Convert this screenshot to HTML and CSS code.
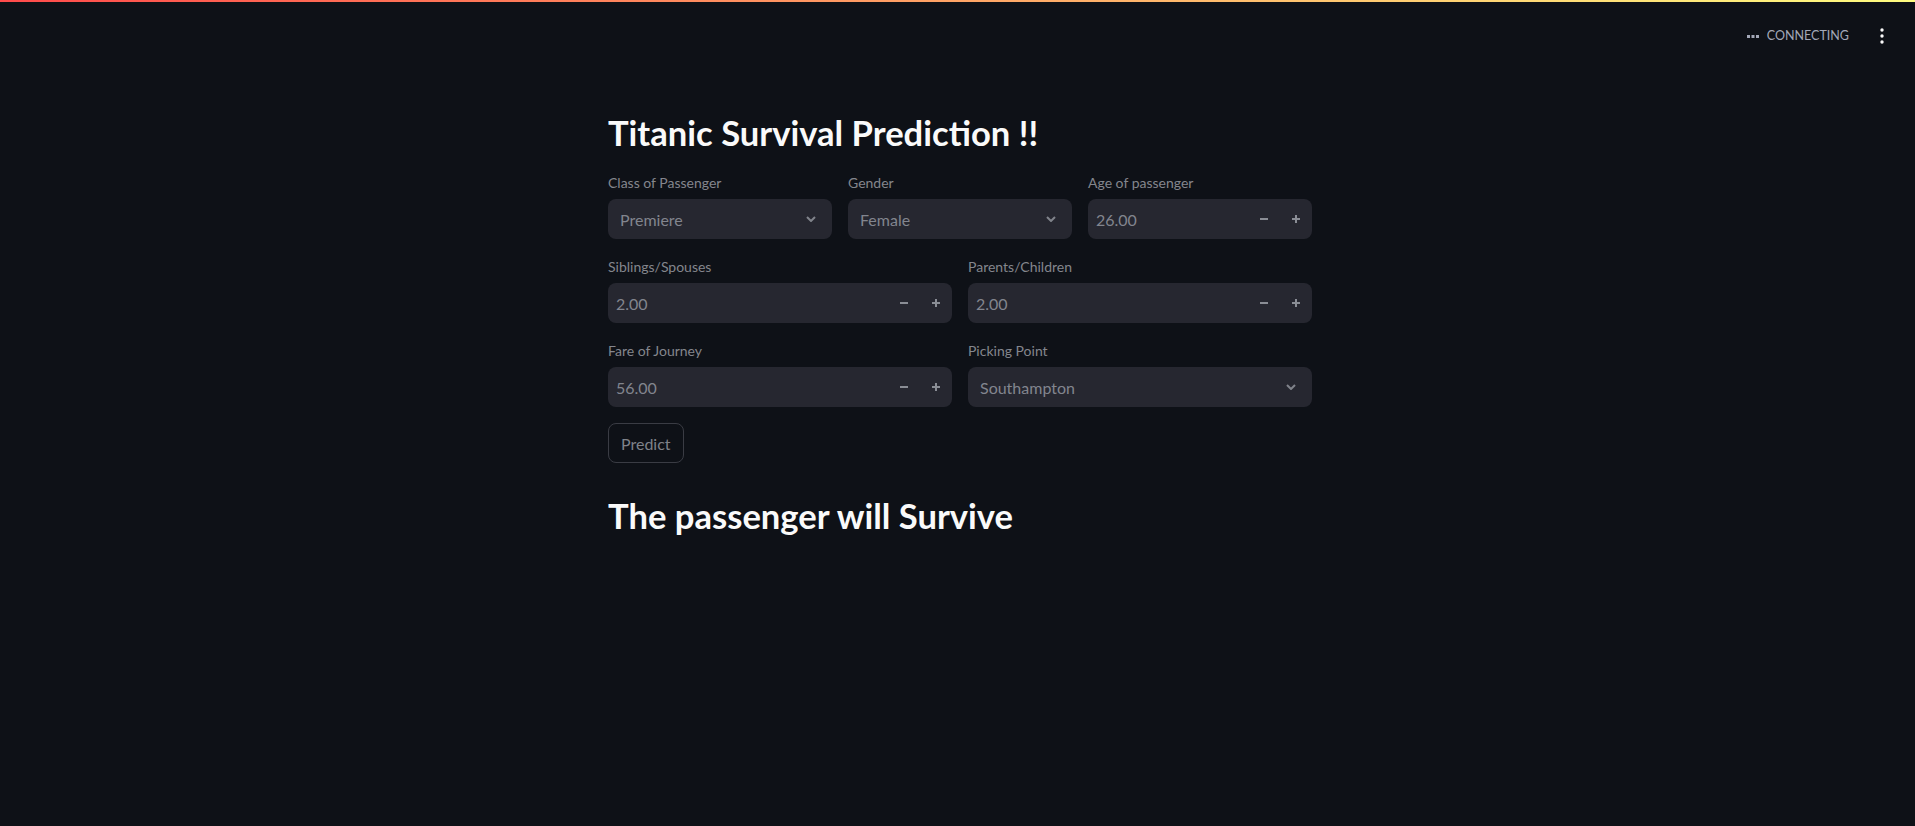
FILE: index.html
```html
<!DOCTYPE html>
<html lang="en">
<head>
<meta charset="utf-8">
<title>Titanic Survival Prediction</title>
<link rel="stylesheet" href="styles.css">
</head>
<body>
<div class="decoration"></div>
<header class="toolbar">
  <div class="status">
    <svg class="status-dots" width="12" height="4" viewBox="0 0 12 4"><rect x="0" y="1" width="3" height="3"/><rect x="4.5" y="1" width="3" height="3"/><rect x="9" y="1" width="3" height="3"/></svg>
    <span class="status-text">CONNECTING</span>
  </div>
  <button class="menu-btn" aria-label="Main menu">
    <svg width="4" height="16" viewBox="0 0 4 16"><circle cx="2" cy="2" r="1.7"/><circle cx="2" cy="8" r="1.7"/><circle cx="2" cy="14" r="1.7"/></svg>
  </button>
</header>
<main class="main">
  <div class="block">
    <h1 class="title">Titanic Survival Prediction !!</h1>

    <div class="row cols-3">
      <div class="field">
        <label class="label">Class of Passenger</label>
        <div class="select"><span class="value">Premiere</span><svg class="chevron" width="10" height="6" viewBox="0 0 10 6"><path d="M1 1l4 4 4-4"/></svg></div>
      </div>
      <div class="field">
        <label class="label">Gender</label>
        <div class="select"><span class="value">Female</span><svg class="chevron" width="10" height="6" viewBox="0 0 10 6"><path d="M1 1l4 4 4-4"/></svg></div>
      </div>
      <div class="field">
        <label class="label">Age of passenger</label>
        <div class="number"><span class="num-value">26.00</span><span class="step"><svg width="8" height="8" viewBox="0 0 8 8"><path d="M0 4h8"/></svg></span><span class="step"><svg width="8" height="8" viewBox="0 0 8 8"><path d="M0 4h8M4 0v8"/></svg></span></div>
      </div>
    </div>

    <div class="row cols-2">
      <div class="field">
        <label class="label">Siblings/Spouses</label>
        <div class="number"><span class="num-value">2.00</span><span class="step"><svg width="8" height="8" viewBox="0 0 8 8"><path d="M0 4h8"/></svg></span><span class="step"><svg width="8" height="8" viewBox="0 0 8 8"><path d="M0 4h8M4 0v8"/></svg></span></div>
      </div>
      <div class="field">
        <label class="label">Parents/Children</label>
        <div class="number"><span class="num-value">2.00</span><span class="step"><svg width="8" height="8" viewBox="0 0 8 8"><path d="M0 4h8"/></svg></span><span class="step"><svg width="8" height="8" viewBox="0 0 8 8"><path d="M0 4h8M4 0v8"/></svg></span></div>
      </div>
    </div>

    <div class="row cols-2">
      <div class="field">
        <label class="label">Fare of Journey</label>
        <div class="number"><span class="num-value">56.00</span><span class="step"><svg width="8" height="8" viewBox="0 0 8 8"><path d="M0 4h8"/></svg></span><span class="step"><svg width="8" height="8" viewBox="0 0 8 8"><path d="M0 4h8M4 0v8"/></svg></span></div>
      </div>
      <div class="field">
        <label class="label">Picking Point</label>
        <div class="select"><span class="value">Southampton</span><svg class="chevron" width="10" height="6" viewBox="0 0 10 6"><path d="M1 1l4 4 4-4"/></svg></div>
      </div>
    </div>

    <div class="actions"><button class="btn">Predict</button></div>

    <h2 class="result">The passenger will Survive</h2>
  </div>
</main>
</body>
</html>
```

FILE: styles.css
```css
* { box-sizing: border-box; }
html, body {
  margin: 0;
  padding: 0;
  background: #0e1117;
  color: #fafafa;
  font-family: Lato, "Noto Sans", sans-serif;
  height: 100%;
}
.decoration {
  position: fixed;
  top: 0;
  left: 0;
  right: 0;
  height: 2px;
  background: linear-gradient(90deg, #ff4b4b, #fffd80);
}
.toolbar {
  height: 72px;
  display: flex;
  justify-content: flex-end;
  align-items: center;
  padding-right: 27px;
  gap: 27px;
}
.status {
  display: flex;
  align-items: center;
  gap: 8px;
  color: #a3a8b8;
}
.status-dots { fill: #a3a8b8; }
.status-text {
  font-size: 12.5px;
  line-height: 16px;
}
.menu-btn {
  background: none;
  border: 0;
  padding: 0 4px;
  display: flex;
  align-items: center;
  height: 20px;
}
.menu-btn svg { fill: #fafafa; }
.main {
  display: flex;
  justify-content: center;
  padding-top: 40px;
  padding-left: 5px;
}
.block {
  width: 704px;
  display: flex;
  flex-direction: column;
  gap: 16px;
}
.title, .result {
  margin: 0;
  font-size: 34.6px;
  line-height: 42px;
  font-weight: 700;
  color: #fafafa;
}
.title { margin-bottom: 1px; }
.result { padding-top: 16px; }
.row {
  display: grid;
  gap: 16px;
}
.cols-3 { grid-template-columns: repeat(3, 1fr); }
.cols-2 { grid-template-columns: repeat(2, 1fr); }
.field {
  display: flex;
  flex-direction: column;
}
.label {
  height: 28px;
  padding-top: 2px;
  font-size: 14px;
  line-height: 20px;
  color: #84868d;
}
.select, .number {
  height: 40px;
  background: #262730;
  border-radius: 8px;
  display: flex;
  align-items: center;
  font-size: 16px;
  color: #82858e;
}
.select {
  padding: 0 16px 0 12px;
  justify-content: space-between;
}
.chevron {
  fill: none;
  stroke: #80838b;
  stroke-width: 2;
}
.number { padding-left: 8px; }
.num-value { flex: 1; }
.step {
  width: 32px;
  height: 40px;
  display: flex;
  align-items: center;
  justify-content: center;
}
.step svg {
  fill: none;
  stroke: #8a8d95;
  stroke-width: 2;
}
.actions { display: flex; }
.btn {
  height: 40px;
  padding: 0 12px;
  background: transparent;
  border: 1px solid #3a3c44;
  border-radius: 8px;
  color: #7f828a;
  font-family: inherit;
  font-size: 16px;
}
```
